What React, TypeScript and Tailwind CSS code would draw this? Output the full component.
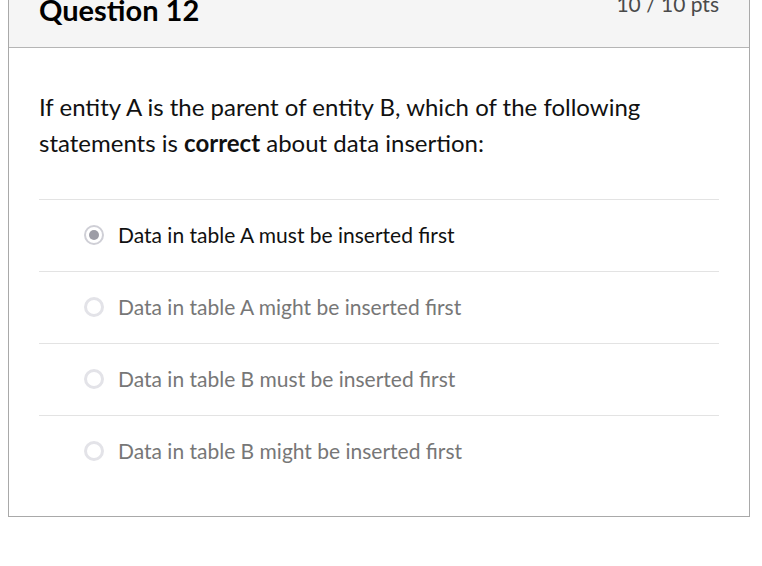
const options = [
  { label: 'Data in table A must be inserted first', selected: true },
  { label: 'Data in table A might be inserted first', selected: false },
  { label: 'Data in table B must be inserted first', selected: false },
  { label: 'Data in table B might be inserted first', selected: false },
]

function Radio({ selected }: { selected: boolean }) {
  if (selected) {
    return (
      <span className="flex h-[20px] w-[20px] shrink-0 items-center justify-center rounded-full border-[2px] border-[#cfcfd6] bg-white">
        <span className="h-[10px] w-[10px] rounded-full bg-[#9d9da6]" />
      </span>
    )
  }
  return <span className="h-[20px] w-[20px] shrink-0 rounded-full border-[3px] border-[#e3e3e8] bg-white" />
}

export default function App() {
  return (
    <div className="h-[566px] overflow-hidden bg-white font-['Lato','Noto_Sans',sans-serif]">
      <div className="-mt-[12px] ml-[8px] w-[742px] border border-[#a9a9a9]">
        <div className="flex h-[59px] items-start justify-between border-b border-[#b5b5b5] bg-[#f5f5f5] px-[30px]">
          <h2 className="pt-[6px] text-[29px] font-bold leading-none text-black">Question 12</h2>
          <span className="pt-[4px] text-[21px] leading-none text-[#4a4a4a]">10 / 10 pts</span>
        </div>
        <div className="px-[30px] pb-[29px] pt-[41px]">
          <p className="text-[24px] leading-[36px] text-[#111]">
            If entity A is the parent of entity B, which of the following statements is{' '}
            <strong className="font-bold">correct</strong> about data insertion:
          </p>
          <div className="mt-[38px]">
            {options.map((o) => (
              <div
                key={o.label}
                className="flex h-[72px] items-center gap-[14px] border-t border-[#e3e3e3] pb-[1px] pl-[45px]"
              >
                <Radio selected={o.selected} />
                <span className={`text-[21px] ${o.selected ? 'text-[#111]' : 'text-[#777]'}`}>{o.label}</span>
              </div>
            ))}
          </div>
        </div>
      </div>
    </div>
  )
}
